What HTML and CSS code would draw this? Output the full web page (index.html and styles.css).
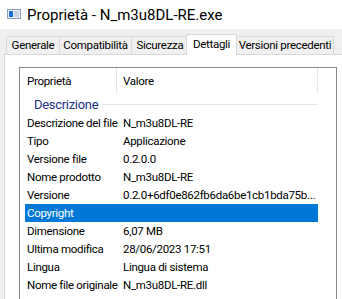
FILE: index.html
```html
<!DOCTYPE html>
<html lang="it">
<head>
  <meta charset="utf-8">
  <meta name="viewport" content="width=device-width, initial-scale=1">
  <title>Proprietà - N_m3u8DL-RE.exe</title>
  <link rel="stylesheet" href="styles.css">
</head>
<body>
  <div class="window">
    <div class="titlebar">
      <svg class="appicon" width="14" height="10" viewBox="0 0 14 10">
        <rect x="0.5" y="0.5" width="13" height="9" fill="#e8edf3" stroke="#8aa2bf"/>
        <rect x="2" y="2" width="4" height="6" fill="#1f6fd1"/>
        <rect x="7" y="2" width="5" height="6" fill="#c7d3e2"/>
      </svg>
      <span class="title">Proprietà - N_m3u8DL-RE.exe</span>
    </div>

    <div class="dialog">
      <div class="tabs">
        <div class="tab t1">Generale</div>
        <div class="tab t2">Compatibilità</div>
        <div class="tab t3">Sicurezza</div>
        <div class="tab active">Dettagli</div>
        <div class="tab t5">Versioni precedenti</div>
      </div>

      <div class="panel">
        <div class="list">
          <div class="head">
            <div class="hcol hprop">Proprietà</div>
            <div class="hcol hval">Valore</div>
          </div>
          <div class="group">
            <span>Descrizione</span>
            <div class="rule"></div>
          </div>
          <div class="row"><div class="k">Descrizione del file</div><div class="v">N_m3u8DL-RE</div></div>
          <div class="row"><div class="k">Tipo</div><div class="v">Applicazione</div></div>
          <div class="row"><div class="k">Versione file</div><div class="v">0.2.0.0</div></div>
          <div class="row"><div class="k">Nome prodotto</div><div class="v">N_m3u8DL-RE</div></div>
          <div class="row"><div class="k">Versione</div><div class="v">0.2.0+6df0e862fb6da6be1cb1bda75b...</div></div>
          <div class="row selected"><div class="k">Copyright</div><div class="v"></div></div>
          <div class="row"><div class="k">Dimensione</div><div class="v">6,07 MB</div></div>
          <div class="row"><div class="k">Ultima modifica</div><div class="v">28/06/2023 17:51</div></div>
          <div class="row"><div class="k">Lingua</div><div class="v">Lingua di sistema</div></div>
          <div class="row"><div class="k">Nome file originale</div><div class="v">N_m3u8DL-RE.dll</div></div>
        </div>
      </div>
    </div>
  </div>
</body>
</html>
```

FILE: styles.css
```css
body {
  margin: 0;
  font-family: Roboto, "Liberation Sans", sans-serif;
  font-size: 11.5px;
  letter-spacing: -0.3px;
  color: #000;
}
.window {
  width: 342px;
  height: 299px;
  overflow: hidden;
  background: #f0f0f0;
}
.titlebar {
  height: 29px;
  background: #fff;
  display: flex;
  align-items: center;
  padding-left: 7px;
  gap: 6px;
}
.appicon {
  margin-top: -2px;
}
.title {
  font-size: 15px;
  letter-spacing: 0;
}
.dialog {
  padding: 5px 0 0 4px;
}
.tabs {
  display: flex;
  align-items: flex-end;
  height: 20px;
  padding-left: 2px;
}
.tab {
  height: 18px;
  line-height: 17px;
  box-sizing: border-box;
  border: 1px solid #d9d9d9;
  border-bottom: none;
  margin-right: -1px;
  background: #f0f0f0;
  text-align: center;
  white-space: nowrap;
}
.t1 { width: 54px; }
.t2 { width: 73px; }
.t3 { width: 58px; }
.t5 { width: 98px; }
.tab.active {
  width: 51px;
  height: 21px;
  line-height: 19px;
  margin: 0 -1px -1px -2px;
  background: #fff;
  position: relative;
  z-index: 1;
}
.panel {
  width: 360px;
  height: 260px;
  background: #fff;
  border: 1px solid #d9d9d9;
  padding: 12px 0 0 14px;
}
.list {
  width: 316px;
  height: 240px;
  border: 1px solid #828790;
}
.head {
  display: flex;
  height: 26px;
}
.hcol {
  box-sizing: border-box;
  line-height: 26px;
  border-right: 1px solid #e5e5e5;
}
.hprop {
  width: 97px;
  padding-left: 7px;
}
.hval {
  width: 201px;
  padding-left: 6px;
}
.group {
  display: flex;
  align-items: center;
  height: 20px;
  padding-left: 14px;
  width: 298px;
  box-sizing: border-box;
  color: #1e3287;
  font-size: 13px;
}
.rule {
  flex: 1;
  height: 1px;
  margin-left: 5px;
  background: #e2e8ef;
}
.row {
  display: flex;
  height: 18px;
  line-height: 18px;
  margin-left: 5px;
  width: 293px;
}
.k {
  width: 92px;
  padding-left: 2px;
  box-sizing: border-box;
  white-space: nowrap;
}
.v {
  flex: 1;
  padding-left: 6px;
  white-space: nowrap;
  overflow: hidden;
  text-overflow: ellipsis;
}
.row.selected {
  background: #0078d7;
  color: #fff;
}
```
